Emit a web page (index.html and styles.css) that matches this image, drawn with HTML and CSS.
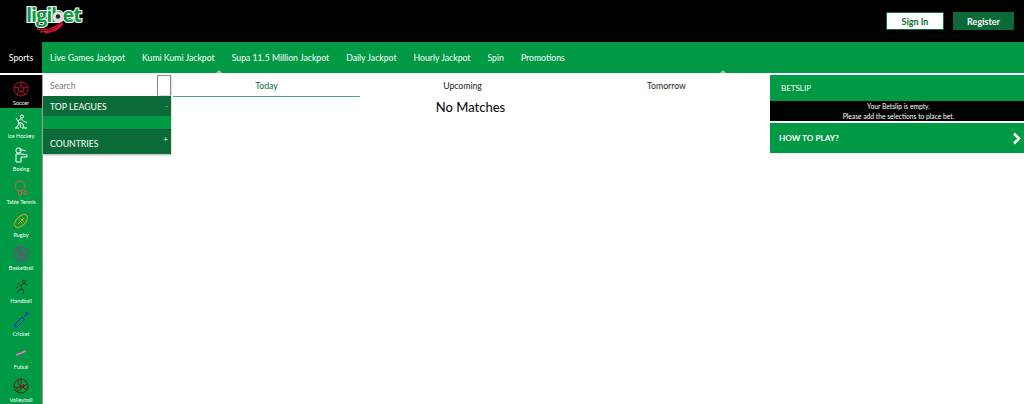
FILE: index.html
```html
<!DOCTYPE html>
<html lang="en">
<head>
<meta charset="utf-8">
<title>ligibet</title>
<link rel="stylesheet" href="styles.css">
</head>
<body>
<header class="top">
  <a class="logo">
    <svg class="logo-svg" width="62" height="36" viewBox="0 0 62 36">
      <text x="1" y="22" class="logo-text" textLength="56">ligibet</text>
      <circle cx="33" cy="17" r="5.500" fill="#ddd"/>
      <circle cx="33" cy="16.500" r="2.200" fill="#222"/>
      <path d="M12 29c9 2 17 0 25-7M15 32c9 0 17-3 23-9M20 33c8-1 14-4 18-9" fill="none" stroke="#d3122a" stroke-width="1.300"/>
    </svg>
  </a>
  <div class="auth">
    <button class="btn btn-in">Sign In</button>
    <button class="btn btn-reg">Register</button>
  </div>
</header>
<nav class="nav">
  <a class="nav-sports">Sports</a>
  <div class="nav-links">
    <a>Live Games Jackpot</a>
    <a>Kumi Kumi Jackpot</a>
    <a>Supa 11.5 Million Jackpot</a>
    <a>Daily Jackpot</a>
    <a>Hourly Jackpot</a>
    <a>Spin</a>
    <a>Promotions</a>
  </div>
  <i class="notch notch-a"></i>
  <i class="notch notch-b"></i>
</nav>
<div class="page">
  <aside class="sports">
    <a class="sport active">
      <svg viewBox="0 0 16 16" class="ico" stroke="#c8102e"><circle cx="8" cy="8" r="7"/><path d="M8 5l3 2-1 3.500H6L5 7zM8 1v4M11 7l4-1M10 10.500l2 3.500M6 10.500L4 14M5 7L1 6"/></svg>
      <span>Soccer</span>
    </a>
    <a class="sport">
      <svg viewBox="0 0 16 16" class="ico" stroke="#fff"><circle cx="9" cy="2.500" r="1.500"/><path d="M8 4.500L5 7l1 3-3 4M8 4.500l3 3 3 1M7 8l3 2 1 4M3 4l4 6 1 4M2 14h4M9 14h5"/></svg>
      <span>Ice Hockey</span>
    </a>
    <a class="sport">
      <svg viewBox="0 0 16 16" class="ico" stroke="#fff"><rect x="3" y="1" width="5" height="5" rx="2"/><path d="M3 7h6l5 1v2H8v5H3zM6 3h4l3 1"/></svg>
      <span>Boxing</span>
    </a>
    <a class="sport">
      <svg viewBox="0 0 16 16" class="ico" stroke="#d9603f"><circle cx="7" cy="6" r="5"/><path d="M5 10.500L6 15h2l1-5"/><circle cx="12.500" cy="12.500" r="1.800"/></svg>
      <span>Table Tennis</span>
    </a>
    <a class="sport">
      <svg viewBox="0 0 16 16" class="ico" stroke="#d9a016"><ellipse cx="8" cy="8" rx="8" ry="4.500" transform="rotate(-45 8 8)"/><path d="M5 11l6-6M6 7l3 3M7.500 5.500l3 3"/></svg>
      <span>Rugby</span>
    </a>
    <a class="sport">
      <svg viewBox="0 0 16 16" class="ico" stroke="#a02aa0"><circle cx="8" cy="8" r="7"/><path d="M3 3l10 10M13 3L3 13M3 8c3-1 4-3 4-6M8 14c0-3 2-5 6-5"/></svg>
      <span>Basketball</span>
    </a>
    <a class="sport">
      <svg viewBox="0 0 16 16" class="ico" stroke="#3a3320"><circle cx="11" cy="2.500" r="1.500"/><path d="M5 4l3 3 3-3 3 2M8 7l1 3-3 1-2 4M9 10l2 2-1 3M3 9c1 0 2-1 2-2"/></svg>
      <span>Handball</span>
    </a>
    <a class="sport">
      <svg viewBox="0 0 16 16" class="ico" stroke="#1224d8"><path d="M1.500 13L9 5l2.500 2.500L4 15H2zM11 5l3-3.500"/><circle cx="14" cy="1.500" r="1" fill="#1224d8"/></svg>
      <span>Cricket</span>
    </a>
    <a class="sport">
      <svg viewBox="0 0 16 16" class="ico ico-futsal" stroke="#f070d0"><path d="M3 10l10-4"/></svg>
      <span>Futsal</span>
    </a>
    <a class="sport">
      <svg viewBox="0 0 16 16" class="ico" stroke="#6a1a14"><circle cx="8" cy="8" r="7"/><path d="M8 8V1M8 8l6 4M8 8l-6 4M5 2c0 4 1 6 3 6M4 13c3-1 6-3 7-7M14 6c-3 3-7 4-12 3"/></svg>
      <span>Volleyball</span>
    </a>
  </aside>
  <section class="filters">
    <div class="search">
      <input class="search-input" placeholder="Search">
      <button class="search-btn" aria-label="Search"></button>
    </div>
    <div class="acc-head"><span>TOP LEAGUES</span><b class="minus">-</b></div>
    <div class="acc-body"></div>
    <div class="acc-head acc-last"><span>COUNTRIES</span><b>+</b></div>
  </section>
  <main class="matches">
    <div class="tabs">
      <a class="tab tab-today">Today</a>
      <a class="tab tab-up">Upcoming</a>
      <a class="tab tab-tom">Tomorrow</a>
    </div>
    <h2 class="none">No Matches</h2>
  </main>
  <aside class="slip">
    <div class="slip-head">BETSLIP</div>
    <div class="slip-empty">
      <p>Your Betslip is empty.</p>
      <p>Please add the selections to place bet.</p>
    </div>
    <div class="how">
      <span>HOW TO PLAY?</span>
      <svg class="chev" width="9" height="13" viewBox="0 0 9 13"><path d="M2 1.500l5 5-5 5" fill="none" stroke="#fff" stroke-width="2.600"/></svg>
    </div>
  </aside>
</div>
</body>
</html>
```
FILE: styles.css
```css
* { box-sizing: border-box; }
html, body { margin: 0; height: 404px; overflow: hidden; background: #fff; }
body { font-family: Lato, "Noto Sans", sans-serif; font-size: 9px; color: #222; }

.top { height: 42px; background: #000; display: flex; justify-content: space-between; align-items: flex-start; }
.logo { display: block; margin: 0 0 0 25px; height: 36px; }
.logo-svg { display: block; }
.logo-text { font-family: "Open Sans", sans-serif; font-size: 20px; font-weight: 700; fill: #0d9a40; stroke: #fff; stroke-width: 2.200px; paint-order: stroke; }
.auth { display: flex; gap: 9px; padding: 12px 10px 0 0; }
.btn { height: 18px; width: 58px; padding: 0; font: 700 9px Lato, sans-serif; border: 1px solid #0b6b38; }
.btn-in { background: #fff; color: #0b6b38; }
.btn-reg { width: 61px; background: #0b6b38; color: #fff; }

.nav { position: relative; height: 31px; display: flex; background: #009a44; border-top: 1px solid #0b8a40; }
.nav a { color: #fff; font-size: 8.700px; line-height: 30px; white-space: nowrap; }
.nav-sports { width: 42px; background: #000; text-align: center; margin-top: -1px; line-height: 31px !important; }
.nav-links { display: flex; gap: 17px; padding-left: 8px; }
.notch { position: absolute; bottom: 0; width: 0; height: 0; border: 3px solid transparent; border-top: 0; border-bottom-color: #8fd4a8; }
.notch-a { left: 216px; }
.notch-b { left: 720px; }

.page { display: flex; height: 329px; margin-top: 2px; }

.sports { width: 43px; flex: none; background: #009a44; border-right: 1px solid #999; overflow: hidden; }
.sport { height: 33px; display: flex; flex-direction: column; align-items: center; padding-top: 6px; color: #fff; font-size: 5.500px; line-height: 8px; white-space: nowrap; }
.sport.active { background: #000; }
.ico { width: 16px; height: 16px; fill: none; stroke-width: 1; margin-bottom: 2px; flex: none; }
.ico-futsal { stroke-width: 1.800; }

.filters { width: 128px; flex: none; align-self: flex-start; box-shadow: 0 1px 2px #aaa; }
.search { display: flex; height: 21px; background: #fff; }
.search-input { flex: 1; min-width: 0; border: 0; outline: 0; padding: 0 7px; font: 8.700px Lato, sans-serif; background: #fff; }
.search-input::placeholder { color: #777; opacity: 1; }
.search-btn { width: 14px; padding: 0; background: #fff; border: 1px solid #888; border-bottom-color: #ddd; }
.acc-head { height: 20px; background: #0b6b38; color: #fff; font-size: 8.700px; line-height: 22px; padding: 0 3px 0 7px; display: flex; justify-content: space-between; }
.acc-head b { font-weight: 400; font-size: 8px; line-height: 18px; }
.acc-head .minus { opacity: .6; line-height: 20px; }
.acc-body { height: 13px; background: #009a44; }
.acc-last { height: 25px; line-height: 27px; border-top: 1px solid #0a5c30; }

.matches { width: 595px; flex: none; margin-left: 2px; }
.tabs { display: flex; height: 22px; }
.tab { line-height: 21px; text-align: center; font-size: 8.700px; color: #222; }
.tab-today { width: 187px; color: #0b6b38; border-bottom: 1px solid #4aa878; }
.tab-up { width: 205px; }
.tab-tom { width: 203px; }
.none { margin: 0; font-size: 13px; font-weight: 500; line-height: 20px; text-align: center; color: #111; }

.slip { width: 254px; flex: none; margin-left: 2px; }
.slip-head { height: 26px; background: #009a44; color: #fff; padding-left: 11px; line-height: 26px; font-size: 8px; }
.slip-empty { height: 20px; background: #000; color: #fff; font-size: 6.700px; text-align: center; padding-left: 3px; }
.slip-empty p { margin: 0; line-height: 10px; }
.how { height: 30px; margin-top: 2px; background: #009a44; color: #fff; font-weight: 700; font-size: 8.200px; display: flex; justify-content: space-between; align-items: center; padding: 0 3px 0 9px; }
```
